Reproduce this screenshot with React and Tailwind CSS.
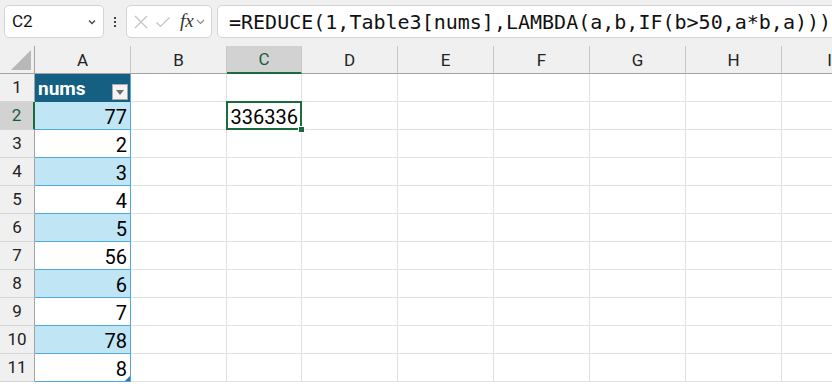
import React from "react";

const colW = ["w-[96px]", "w-[96px]", "w-[75px]", "w-[96px]", "w-[96px]", "w-[96px]", "w-[96px]", "w-[96px]", "w-[96px]"];
const letters = ["A", "B", "C", "D", "E", "F", "G", "H", "I"];
const nums = [77, 2, 3, 4, 5, 56, 6, 7, 78, 8];

function ColHeader() {
  return (
    <div className="flex h-[28px] bg-[#f0f0f0]">
      <div className="relative w-[35px] shrink-0 border-r border-b border-[#a3a3a3]">
        <svg className="absolute left-0 top-0" width="35" height="28" viewBox="0 0 35 28">
          <polygon points="31,4 31,24 11,24" fill="#b8b8b8" />
        </svg>
      </div>
      {letters.map((l, i) => {
        const sel = l === "C";
        return (
          <div
            key={l}
            className={`${colW[i]} shrink-0 flex items-center justify-center text-[17px] ${
              sel
                ? "bg-[#d2d2d2] text-[#185c37] border-b-2 border-b-[#1b6b3e] border-r border-r-[#c6c6c6]"
                : "text-[#222] border-b border-b-[#a3a3a3] border-r border-r-[#c6c6c6]"
            }`}
          >
            <span className="pt-[2px]">{l}</span>
          </div>
        );
      })}
    </div>
  );
}

function Row({ r }) {
  const sel = r === 2;
  const isHeader = r === 1;
  const idx = r - 2;
  const banded = r >= 2 && r % 2 === 0;
  return (
    <div className="flex h-[28px]">
      <div
        className={`w-[35px] shrink-0 flex items-center justify-center text-[17px] border-b border-b-[#d5d5d5] ${
          sel
            ? "bg-[#d2d2d2] text-[#185c37] border-r-2 border-r-[#1b6b3e]"
            : "bg-[#f0f0f0] text-[#222] border-r border-r-[#a3a3a3]"
        }`}
      >
        <span className="pt-[1px]">{r}</span>
      </div>
      {isHeader ? (
        <div className="relative w-[96px] shrink-0 bg-[#156082] border-r border-r-[#4ea8de] flex items-center pl-[3px]">
          <span className="text-white font-bold text-[19px] leading-none pt-[1px]">nums</span>
          <div className="absolute right-[2px] top-[10px] w-[16px] h-[16px] bg-[#f4f4f4] border border-[#a8a8a8] flex items-center justify-center">
            <svg width="8" height="5" viewBox="0 0 8 5">
              <polygon points="0,0 8,0 4,5" fill="#707070" />
            </svg>
          </div>
        </div>
      ) : (
        <div
          className={`relative w-[96px] shrink-0 border-r border-b border-[#4ea8de] flex items-center justify-end pr-[3px] text-[20px] text-black ${
            banded ? "bg-[#c0e6f5]" : "bg-white"
          }`}
        >
          <span className="pt-[2px]">{nums[idx]}</span>
          {r === 11 && (
            <svg className="absolute right-[0px] bottom-[0px]" width="5" height="5" viewBox="0 0 5 5">
              <polygon points="5,0 5,5 0,5" fill="#2f6fb5" />
            </svg>
          )}
        </div>
      )}
      {letters.slice(1).map((l, j) => {
        const i = j + 1;
        const isC2 = l === "C" && r === 2;
        return (
          <div
            key={l}
            className={`relative ${colW[i]} shrink-0 bg-white border-r border-b border-[#e1e1e1] flex items-center justify-end pr-[3px] text-[20px] text-black`}
          >
            {isC2 && (
              <>
                <span className="pt-[2px] relative z-10">336336</span>
                <div className="absolute -left-[1px] -top-[1px] -right-[1px] -bottom-[1px] border-2 border-[#1b6b3e] z-10" />
                <div className="absolute -right-[4px] -bottom-[4px] w-[7px] h-[7px] bg-[#1b6b3e] border border-white z-20" />
              </>
            )}
          </div>
        );
      })}
    </div>
  );
}

export default function App() {
  return (
    <div
      className="w-[832px] h-[384px] overflow-hidden bg-white"
      style={{ fontFamily: "Roboto, 'Liberation Sans', sans-serif" }}
    >
      <div className="h-[46px] bg-[#f0f0f0] flex items-start pt-[5px] pl-[4px] overflow-hidden">
        <div className="w-[100px] h-[33px] shrink-0 bg-white border border-[#d4d4d4] rounded-[5px] flex items-center justify-between pl-[7px] pr-[5px]">
          <span className="text-[17px] text-[#111] pt-[1px]">C2</span>
          <svg width="12" height="12" viewBox="0 0 12 12">
            <path d="M3 4.5 L6 7.5 L9 4.5" fill="none" stroke="#444" strokeWidth="1.3" />
          </svg>
        </div>
        <div className="w-[22px] shrink-0 h-[33px] flex flex-col items-center justify-center gap-[2px]">
          <div className="w-[2px] h-[2px] bg-[#444]" />
          <div className="w-[2px] h-[2px] bg-[#444]" />
          <div className="w-[2px] h-[2px] bg-[#444]" />
        </div>
        <div className="w-[86px] h-[33px] shrink-0 bg-white border border-[#d4d4d4] rounded-[5px] flex items-center pl-[6px]">
          <svg width="16" height="16" viewBox="0 0 16 16">
            <path d="M2 2 L14 14 M14 2 L2 14" stroke="#c2c2c2" strokeWidth="1.2" fill="none" />
          </svg>
          <svg className="ml-[6px]" width="16" height="16" viewBox="0 0 16 16">
            <path d="M1.5 8.5 L5.5 12.5 L14.5 3.5" stroke="#c2c2c2" strokeWidth="1.2" fill="none" />
          </svg>
          <span
            className="ml-[9px] text-[19px] italic text-[#333] leading-none pb-[2px]"
            style={{ fontFamily: "'Liberation Serif', serif" }}
          >
            fx
          </span>
          <svg className="ml-[1px]" width="11" height="11" viewBox="0 0 11 11">
            <path d="M2 4 L5.5 7.5 L9 4" fill="none" stroke="#8a8a8a" strokeWidth="1.1" />
          </svg>
        </div>
        <div className="ml-[5px] w-[700px] h-[33px] shrink-0 bg-white border border-[#d4d4d4] rounded-[5px] flex items-center pl-[11px]">
          <span
            className="text-[20px] text-[#111] whitespace-nowrap leading-none"
            style={{ fontFamily: "'DejaVu Sans Mono', 'Liberation Mono', monospace" }}
          >
            =REDUCE(1,Table3[nums],LAMBDA(a,b,IF(b&gt;50,a*b,a)))
          </span>
        </div>
      </div>
      <ColHeader />
      {Array.from({ length: 11 }, (_, k) => k + 1).map((r) => (
        <Row key={r} r={r} />
      ))}
    </div>
  );
}
